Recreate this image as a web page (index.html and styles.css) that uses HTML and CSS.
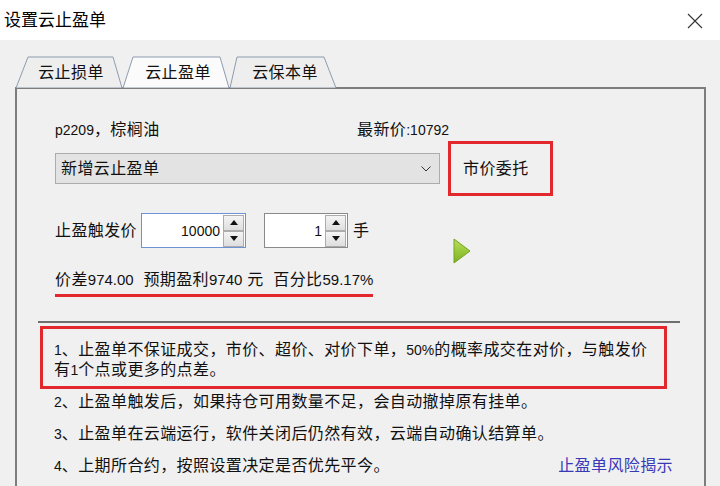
FILE: index.html
```html
<!DOCTYPE html>
<html lang="zh-CN">
<head>
  <meta charset="UTF-8" />
  <title>设置云止盈单</title>
  <link rel="stylesheet" href="styles.css">
</head>

<body>
  <!-- Title bar -->
  <div class="titlebar">
    <span class="title">设置云止盈单</span>
    <svg class="close" width="16" height="16" viewBox="0 0 16 16">
      <path d="M1 1 L15 15 M15 1 L1 15" stroke="#333" stroke-width="1.1" fill="none" />
    </svg>
  </div>

  <div class="client">
    <!-- Tabs -->
    <div class="tabs">
      <div class="tab">
        <svg class="tab-shape" width="110" height="32" viewBox="0 0 110 32">
          <polygon points="2,32 14,1 99,1 108,32" />
        </svg>
        <span>云止损单</span>
      </div>
      <div class="tab active">
        <svg class="tab-shape" width="110" height="32" viewBox="0 0 110 32">
          <polygon points="2,32 12,1 99,1 108,32" />
        </svg>
        <span>云止盈单</span>
      </div>
      <div class="tab">
        <svg class="tab-shape" width="110" height="32" viewBox="0 0 110 32">
          <polygon points="2,32 9,1 96,1 108,32" />
        </svg>
        <span>云保本单</span>
      </div>
    </div>

    <!-- Tab page -->
    <div class="panel">
      <div class="info-row">
        <span class="contract"><span class="num">p2209</span>，棕榈油</span>
        <span>最新价<span class="num">:10792</span></span>
      </div>

      <div class="order-row">
        <div class="combo">
          <span>新增云止盈单</span>
          <svg width="10" height="6" viewBox="0 0 10 6">
            <path d="M0.5 0.5 L5 5 L9.5 0.5" stroke="#333" stroke-width="1" fill="none" />
          </svg>
        </div>
        <div class="market-box">市价委托</div>
      </div>

      <div class="trigger-row">
        <span class="label">止盈触发价</span>
        <div class="spin-input focused">
          <span class="value num">10000</span>
          <div class="spin">
            <div class="spin-btn up"></div>
            <div class="spin-btn down"></div>
          </div>
        </div>
        <div class="spin-input lots">
          <span class="value num">1</span>
          <div class="spin">
            <div class="spin-btn up"></div>
            <div class="spin-btn down"></div>
          </div>
        </div>
        <span class="unit">手</span>
        <svg class="go" width="18" height="26" viewBox="0 0 18 26">
          <defs>
            <linearGradient id="goFill" x1="0" y1="0" x2="0" y2="1">
              <stop offset="0" stop-color="#b9de5c" />
              <stop offset="0.5" stop-color="#99c93a" />
              <stop offset="1" stop-color="#7db027" />
            </linearGradient>
          </defs>
          <polygon points="1,1 17,13 1,25" fill="url(#goFill)" stroke="#74a324" stroke-width="1" />
        </svg>
      </div>

      <div class="summary">价差<span class="num">974.00</span>  预期盈利<span class="num">9740</span> 元  百分比<span class="num">59.17%</span></div>

      <div class="divider"></div>

      <!-- Notes -->
      <div class="notes">
        <p class="note-marked"><span class="num">1</span>、止盈单不保证成交，市价、超价、对价下单，<span class="num">50%</span>的概率成交在对价，与触发价<br/>有<span class="num">1</span>个点或更多的点差。</p>
        <p class="note first"><span class="num">2</span>、止盈单触发后，如果持仓可用数量不足，会自动撤掉原有挂单。</p>
        <p class="note"><span class="num">3</span>、止盈单在云端运行，软件关闭后仍然有效，云端自动确认结算单。</p>
        <div class="note last">
          <span><span class="num">4</span>、上期所合约，按照设置决定是否优先平今。</span>
          <a href="#">止盈单风险揭示</a>
        </div>
      </div>
    </div>
  </div>
</body>
</html>
```

FILE: styles.css
```css
/* Basic reset */
* {
  margin: 0;
  padding: 0;
  box-sizing: border-box;
}

body {
  width: 720px;
  height: 486px;
  overflow: hidden;
  display: flex;
  flex-direction: column;
  background-color: #f0f0f0;
  color: #111;
  font-family: "Liberation Sans", "Noto Sans CJK SC", sans-serif;
  font-size: 16px;
  line-height: 20px;
  letter-spacing: 0.4px;
}

.num {
  font-size: 14px;
  letter-spacing: 0;
}

/* Title bar */
.titlebar {
  height: 40px;
  background-color: #fff;
  display: flex;
  align-items: center;
  justify-content: space-between;
  padding: 2px 17px 0 4px;
}

.title {
  font-size: 17px;
  letter-spacing: 0;
  color: #000;
}

/* Window body */
.client {
  flex: 1;
  display: flex;
  flex-direction: column;
  padding: 16px 14px 0 15px;
}

/* Tabs */
.tabs {
  display: flex;
  height: 31px;
  margin-left: -1px;
}

.tab {
  position: relative;
  width: 110px;
  height: 31px;
  margin-right: -3px;
  display: flex;
  align-items: center;
  justify-content: center;
  padding: 3px 0 0 4px;
  color: #111;
}

.tab span {
  position: relative;
}

.tab-shape {
  position: absolute;
  left: 0;
  top: 0;
}

.tab-shape polygon {
  fill: #eeeeee;
  stroke: #8e9cae;
  stroke-width: 1;
}

.tab.active {
  z-index: 1;
}

.tab.active .tab-shape polygon {
  fill: #fbfbfb;
}

/* Tab page */
.panel {
  flex: 1;
  border: 2px solid #7d7d7d;
  border-bottom: none;
  padding: 31px 0 0 38px;
  display: flex;
  flex-direction: column;
  align-items: flex-start;
}

.info-row {
  display: flex;
}

.contract {
  width: 302px;
}

.order-row {
  display: flex;
  align-items: center;
  margin-top: 1px;
}

.combo {
  width: 385px;
  height: 31px;
  margin-right: 8px;
  display: flex;
  align-items: center;
  justify-content: space-between;
  padding: 0 8px 0 5px;
  background-color: #e3e3e3;
  border: 1px solid #acacac;
}

.market-box {
  width: 105px;
  height: 55px;
  display: flex;
  align-items: center;
  padding-left: 12px;
  border: 3px solid #e2282c;
}

/* Trigger price row */
.trigger-row {
  display: flex;
  align-items: center;
  margin-top: 17px;
  height: 35px;
}

.label {
  margin-right: 4px;
}

.spin-input {
  height: 35px;
  display: flex;
  align-items: center;
  justify-content: flex-end;
  background-color: #fff;
  border: 1px solid #8a8a8a;
  padding: 1px;
}

.spin-input.focused {
  width: 105px;
  border-color: #6f92d4;
  margin-right: 18px;
}

.spin-input.lots {
  width: 84px;
  margin-right: 5px;
}

.value {
  padding-right: 3px;
}

.spin {
  display: flex;
  flex-direction: column;
}

.spin-btn {
  width: 21px;
  height: 16px;
  display: flex;
  align-items: center;
  justify-content: center;
  background: linear-gradient(#f4f4f4, #dedede);
  border: 1px solid #acacac;
}

.spin-btn::before {
  content: "";
  border-left: 4px solid transparent;
  border-right: 4px solid transparent;
}

.spin-btn.up::before {
  border-bottom: 5px solid #111;
}

.spin-btn.down::before {
  border-top: 5px solid #111;
}

.unit {
  margin-right: 84px;
}

.go {
  align-self: flex-end;
  margin-bottom: -16px;
}

/* Summary with red underline */
.summary {
  margin-top: 22px;
  padding-bottom: 4px;
  border-bottom: 3px solid #e2282c;
  white-space: pre;
}

.summary .num {
  font-size: 15px;
}

.divider {
  width: 642px;
  height: 2px;
  margin: 24px 0 0 -17px;
  background-color: #6e6e6e;
}

/* Notes */
.notes {
  display: flex;
  flex-direction: column;
  margin-top: 3px;
}

.note-marked {
  width: 627px;
  margin-left: -15px;
  padding: 11px 0 6px 11px;
  border: 3px solid #e2282c;
}

.note {
  margin-top: 12px;
  margin-left: -1px;
}

.note.first {
  margin-top: 3px;
}

.note.last {
  width: 619px;
  display: flex;
  justify-content: space-between;
}

.note.last a {
  color: #3838b8;
  text-decoration: none;
}
```
